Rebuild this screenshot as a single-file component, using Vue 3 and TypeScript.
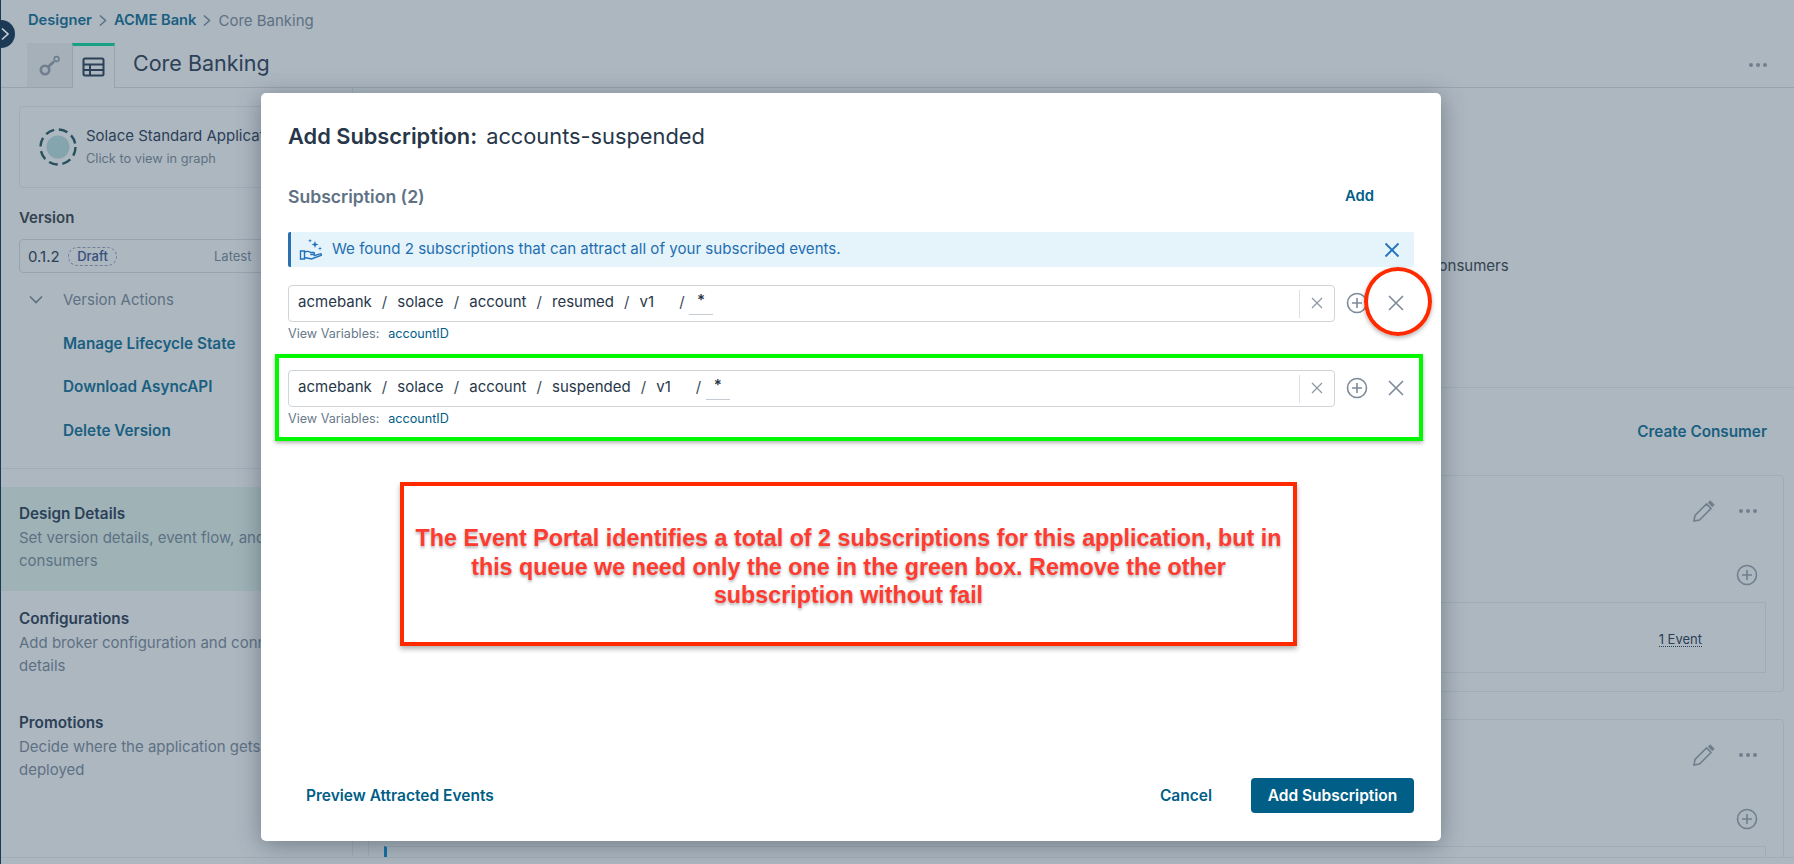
<script setup lang="ts">
interface Row { segs: string[] }
const rows: Row[] = [
  { segs: ['acmebank', 'solace', 'account', 'resumed', 'v1'] },
  { segs: ['acmebank', 'solace', 'account', 'suspended', 'v1'] },
]
const steps = [
  { title: 'Design Details', lines: ['Set version details, event flow, and', 'consumers'], on: true },
  { title: 'Configurations', lines: ['Add broker configuration and connection', 'details'], on: false },
  { title: 'Promotions', lines: ['Decide where the application gets', 'deployed'], on: false },
]
const links = ['Manage Lifecycle State', 'Download AsyncAPI', 'Delete Version']
</script>

<template>
  <div class="page">
    <div class="strip"></div>
    <div class="collapse">
      <svg width="12" height="14" viewBox="0 0 12 14"><path d="M3 1.500 9 7l-6 5.500" fill="none" stroke="#c9d2da" stroke-width="1.600"/></svg>
    </div>

    <div class="crumbs">
      <span class="crumb-link">Designer</span>
      <svg class="crumb-sep" width="8" height="13" viewBox="0 0 8 13"><path d="M1 1.500 6.500 6.500l-5.500 5" fill="none" stroke="#5d7183" stroke-width="1.500"/></svg>
      <span class="crumb-link">ACME Bank</span>
      <svg class="crumb-sep" width="8" height="13" viewBox="0 0 8 13"><path d="M1 1.500 6.500 6.500l-5.500 5" fill="none" stroke="#5d7183" stroke-width="1.500"/></svg>
      <span class="crumb-cur">Core Banking</span>
    </div>

    <div class="tabs">
      <div class="tab tab-off">
        <svg width="22" height="22" viewBox="0 0 22 22" fill="none" stroke="#6f7f8e"><circle cx="6" cy="16" r="4.200" stroke-width="2.600"/><path d="M9 13l6-5.500" stroke-width="2.800"/><circle cx="17.600" cy="5" r="2.400" stroke-width="1.600"/></svg>
      </div>
      <div class="tab tab-on">
        <svg width="23" height="20" viewBox="0 0 23 20" fill="none" stroke="#2c4057" stroke-width="2"><rect x="1.500" y="1.500" width="20" height="17" rx="1.500"/><path d="M1.500 7.500h20M1.500 13h20M8 7.500v11"/></svg>
      </div>
      <div class="app-title">Core Banking</div>
      <div class="head-dots"><i></i><i></i><i></i></div>
    </div>

    <div class="body">
      <aside class="side">
        <div class="app-card">
          <svg width="40" height="40" viewBox="0 0 40 40"><circle cx="20" cy="20" r="17.500" fill="none" stroke="#27515f" stroke-width="2.400" stroke-dasharray="9 4.800"/><circle cx="20" cy="20" r="11.500" fill="#84a5ae"/></svg>
          <div class="app-card-text">
            <div class="app-name">Solace Standard Application</div>
            <div class="app-hint">Click to view in graph</div>
          </div>
        </div>
        <div class="ver-label">Version</div>
        <div class="ver-select">
          <span class="ver-num">0.1.2</span>
          <span class="draft">Draft</span>
          <span class="latest">Latest</span>
        </div>
        <div class="ver-actions">
          <svg width="16" height="10" viewBox="0 0 16 10"><path d="M2 1.500 8 7.500l6-6" fill="none" stroke="#5d7183" stroke-width="1.700"/></svg>
          <span>Version Actions</span>
        </div>
        <div class="ver-link" v-for="l in links" :key="l">{{ l }}</div>
        <div class="side-div"></div>
        <div class="step" :class="{ 'step-on': s.on }" v-for="s in steps" :key="s.title">
          <div class="step-title">{{ s.title }}</div>
          <div class="step-line" v-for="t in s.lines" :key="t">{{ t }}</div>
        </div>
      </aside>

      <main class="main">
        <div class="overview"><p class="overview-text">consumers</p></div>
        <div class="cons-head"><span class="create">Create Consumer</span></div>
        <section class="cons-card" v-for="n in 2" :key="n">
          <div class="cons-top">
            <svg width="26" height="26" viewBox="0 0 26 26" fill="none" stroke="#6f7f8e" stroke-width="1.600"><path d="M3 23 4 17.500 15.500 6l4.500 4.500L8.500 22z"/><path d="M18 3.500l4.500 4.500" stroke-width="3.400"/></svg>
            <div class="dots"><i></i><i></i><i></i></div>
          </div>
          <div class="cons-add">
            <svg width="22" height="22" viewBox="0 0 22 22" fill="none" stroke="#6f7f8e" stroke-width="1.600"><circle cx="11" cy="11" r="9.500"/><path d="M11 6v10M6 11h10"/></svg>
          </div>
          <div class="cons-inner"><span class="ev" v-if="n === 1">1 Event</span></div>
        </section>
      </main>
    </div>
    <div class="foot"></div>

    <div class="modal">
      <h2 class="m-title"><b>Add Subscription:</b><span>accounts-suspended</span></h2>
      <div class="m-sub">
        <span class="m-sub-label">Subscription (2)</span>
        <span class="m-add">Add</span>
      </div>
      <div class="alert">
        <svg class="alert-icon" width="24" height="24" viewBox="0 0 24 24" fill="none" stroke="#2272b9" stroke-width="1.400">
          <path d="M1.500 13h4v8h-4zM5.500 14.500c2-1.500 4-1.500 6 0h3.200c1 0 1 2 0 2h-3.400M5.500 19.500l7 1.500 9.500-3.600c.9-.7 0-2-1-1.600l-6.300 2.100"/>
          <path d="M16 3l.9 2.600 2.600.9-2.600.9-.9 2.600-.9-2.600-2.600-.9 2.600-.9z" fill="#2272b9" stroke="none"/>
          <path d="M11 .8l.5 1.500 1.500.5-1.500.5-.5 1.500-.5-1.500L9 2.800l1.500-.5zM21 8.500l.5 1.500 1.500.5-1.500.5-.5 1.500-.5-1.500-1.500-.5 1.500-.5z" fill="#2272b9" stroke="none"/>
        </svg>
        <span class="alert-text">We found 2 subscriptions that can attract all of your subscribed events.</span>
        <svg width="16" height="16" viewBox="0 0 16 16" fill="none" stroke="#2272b9" stroke-width="1.800"><path d="M1.500 1.500l13 13M14.500 1.500l-13 13"/></svg>
      </div>

      <div class="sub-row" v-for="(r, i) in rows" :key="i">
        <div class="sub-main">
          <div class="sub-input">
            <div class="topic">
              <template v-for="(s, j) in r.segs" :key="j">
                <span v-if="j > 0" class="slash">/</span>
                <span>{{ s }}</span>
              </template>
              <span class="slash slash-last">/</span>
              <span class="wild">*</span>
            </div>
            <div class="clear">
              <svg width="12" height="12" viewBox="0 0 12 12" fill="none" stroke="#8b97a5" stroke-width="1.200"><path d="M1 1l10 10M11 1 1 11"/></svg>
            </div>
          </div>
          <div class="sub-actions">
            <svg class="act-plus" width="22" height="22" viewBox="0 0 22 22" fill="none" stroke="#7d8a99" stroke-width="1.600"><circle cx="11" cy="11" r="9.500"/><path d="M11 6v10M6 11h10"/></svg>
            <svg class="act-x" width="16" height="16" viewBox="0 0 16 16" fill="none" stroke="#7d8a99" stroke-width="1.600"><path d="M1 1l14 14M15 1 1 15"/></svg>
          </div>
        </div>
        <div class="vars"><span class="vars-label">View Variables:</span><span class="vars-val">accountID</span></div>
      </div>

      <div class="m-foot">
        <span class="preview">Preview Attracted Events</span>
        <span class="cancel">Cancel</span>
        <span class="primary">Add Subscription</span>
      </div>

      <div class="mark-circle"></div>
      <div class="mark-green"></div>
      <div class="mark-note">
        The Event Portal identifies a total of 2 subscriptions for this application, but in<br>
        this queue we need only the one in the green box. Remove the other<br>
        subscription without fail
      </div>
    </div>
  </div>
</template>

<style>
html, body { margin: 0; padding: 0; }
</style>

<style scoped>
.page {
  position: relative;
  width: 1794px;
  height: 864px;
  overflow: hidden;
  background: #adb7c0;
  font-family: Inter, "Noto Sans", sans-serif;
  font-size: 15px;
  color: #2c4057;
  display: flex;
  flex-direction: column;
}
.strip { position: absolute; left: 0; top: 0; bottom: 0; width: 1px; background: #1c3a55; z-index: 2; }
.collapse {
  position: absolute; left: -13px; top: 20px; width: 28px; height: 28px; border-radius: 50%;
  background: #1c3a55; display: flex; align-items: center; justify-content: flex-end; padding-right: 4px; box-sizing: border-box; z-index: 3;
}
.crumbs { height: 43px; padding: 0 0 3px 28px; box-sizing: border-box; display: flex; align-items: center; gap: 7px; }
.crumb-link { font-weight: 600; color: #1a5f80; font-size: 14.700px; }
.crumb-cur { color: #5d7183; }
.tabs { height: 45px; box-sizing: border-box; border-bottom: 1px solid #97a4b0; padding: 0 27px 0 27px; display: flex; align-items: stretch; }
.tab { display: flex; align-items: center; justify-content: center; height: 44px; box-sizing: border-box; }
.tab-off { width: 45px; background: #a6b0b9; }
.tab-on { width: 43px; border-top: 3px solid #17a084; border-right: 1px solid #97a4b0; border-left: 1px solid #97a4b0; margin-bottom: -1px; height: 45px; background: #adb7c0; }
.app-title { margin-left: 18px; font-size: 21.500px; line-height: 40px; color: #2c4057; }
.head-dots { margin-left: auto; display: flex; gap: 3px; align-items: center; }
.head-dots i, .dots i { width: 4px; height: 4px; border-radius: 50%; background: #6f7f8e; display: block; }
.body { flex: 1; display: flex; min-height: 0; }
.side { width: 353px; box-sizing: border-box; border-right: 1px solid #a0acb7; flex: none; }
.app-card { margin: 18px 0 0 19px; width: 320px; height: 82px; box-sizing: border-box; border: 1px solid #a0acb7; border-radius: 4px; display: flex; align-items: center; padding-left: 18px; white-space: nowrap; overflow: hidden; }
.app-card-text { margin-left: 8px; }
.app-name { font-size: 15px; line-height: 20px; color: #2c4057; }
.app-hint { font-size: 12.800px; line-height: 18px; margin-top: 4px; color: #5d7183; }
.ver-label { margin: 20px 0 0 19px; font-weight: 600; line-height: 20px; color: #33434f; }
.ver-select { margin: 11px 0 0 19px; width: 320px; height: 34px; box-sizing: border-box; border: 1px solid #97a4b0; border-radius: 4px; display: flex; align-items: center; padding-left: 8px; }
.ver-num { width: 40px; color: #2c4057; }
.draft { border: 1px dashed #6f7f9e; border-radius: 10px; height: 19px; width: 49px; box-sizing: border-box; text-align: center; font-size: 13px; font-weight: 500; line-height: 16px; color: #35507a; }
.latest { margin-left: 97px; font-size: 13px; color: #5d7183; }
.ver-actions { margin: 17px 0 0 28px; display: flex; align-items: center; gap: 19px; line-height: 20px; color: #5d7183; }
.ver-link { margin: 23.500px 0 0 63px; line-height: 20px; font-weight: 600; font-size: 15.300px; color: #1a5f80; }
.side-div { margin-top: 27px; height: 1px; background: #a0acb7; }
.step { margin-top: 0; height: 104px; box-sizing: border-box; padding: 18px 0 0 19px; white-space: nowrap; overflow: hidden; }
.side-div + .step { margin-top: 18px; }
.step-on { background: #9fb3b7; padding-top: 17px; }
.step-title { font-weight: 600; line-height: 20px; font-size: 15.300px; color: #2c4057; margin-bottom: 2px; }
.step-line { line-height: 23.500px; color: #5d7183; }
.main { flex: 1; min-width: 0; padding-right: 10px; padding-left: 15px; overflow: hidden; }
.overview { height: 299px; border-bottom: 1px solid #a0acb7; margin: 0 -10px 0 -15px; }
.overview-text { margin: 0; padding: 168px 0 0 1077px; line-height: 20px; color: #33434f; }
.cons-head { height: 87px; display: flex; justify-content: flex-end; align-items: center; padding-right: 17px; }
.create { font-weight: 600; font-size: 15.300px; color: #1a5f80; }
.cons-card { border: 1px solid #a0acb7; border-radius: 4px; height: 217px; box-sizing: border-box; margin-bottom: 27px; padding: 0 17px 0 15px; }
.cons-top { height: 70px; display: flex; align-items: center; justify-content: flex-end; gap: 22px; padding-right: 9px; }
.dots { display: flex; gap: 3px; width: 18px; }
.cons-add { height: 56px; box-sizing: border-box; padding: 18px 8px 0 0; display: flex; justify-content: flex-end; align-items: flex-start; }
.cons-inner { height: 71px; box-sizing: border-box; border: 1px solid #a0acb7; border-left: 3px solid #1172a4; display: flex; align-items: center; justify-content: flex-end; padding: 3px 63px 0 0; }
.ev { font-size: 13px; border-bottom: 1px dotted #2c4057; line-height: 14px; color: #2c4057; }
.foot { height: 7px; border-top: 1px solid #a0acb7; box-sizing: border-box; flex: none; }

.modal {
  position: absolute; left: 261px; top: 93px; width: 1180px; height: 748px; box-sizing: border-box; z-index: 5;
  background: #fff; border-radius: 5px; box-shadow: 0 4px 24px rgba(40, 55, 70, .45);
  padding: 29px 27px 28px; display: flex; flex-direction: column;
}
.m-title { margin: 0; display: flex; gap: 9px; font-size: 21.800px; line-height: 28px; font-weight: 400; color: #273749; }
.m-title b { font-weight: 600; }
.m-sub { margin-top: 35px; height: 24px; display: flex; align-items: center; justify-content: space-between; }
.m-sub-label { font-size: 17.600px; font-weight: 600; color: #5f7285; margin-bottom: 1px; }
.m-add { font-weight: 600; font-size: 14.800px; color: #015e87; margin: 0 40px 2px 0; }
.alert {
  margin-top: 23px; height: 35px; box-sizing: border-box; background: #e5f3fb; border-left: 3px solid #2a6fb0; border-radius: 2px;
  display: flex; align-items: center; padding: 0 14px 0 8px; margin-bottom: 18px;
}
.alert-icon { flex: none; }
.alert-text { margin: 0 0 2px 9px; color: #1f6fb0; font-size: 15.100px; flex: 1; }
.sub-row { height: 85px; }
.sub-main { display: flex; align-items: center; height: 37px; }
.sub-input { width: 1047px; height: 37px; box-sizing: border-box; border: 1px solid #cfd4d9; border-radius: 4px; display: flex; align-items: center; padding-left: 9px; }
.topic { flex: 1; display: flex; align-items: center; gap: 10.100px; color: #273749; font-size: 15px; padding-bottom: 4px; box-sizing: border-box; }
.slash { color: #3a4a5a; }
.slash-last { margin-left: 15px; }
.wild { width: 24px; height: 24px; margin: 3px 0 0 -5.700px; box-sizing: border-box; border-bottom: 1px solid #c4cbd2; text-align: center; line-height: 18px; font-weight: 600; }
.clear { width: 35px; height: 28px; border-left: 1px solid #dcdfe3; display: flex; align-items: center; justify-content: center; box-sizing: border-box; padding-bottom: 1px; }
.sub-actions { display: flex; align-items: center; padding-bottom: 2px; }
.act-plus { margin-left: 11px; }
.act-x { margin-left: 20px; }
.vars { margin-top: 3px; height: 16px; display: flex; align-items: center; gap: 9px; font-size: 12.600px; }
.vars-label { color: #6a7a8a; }
.vars-val { color: #015e87; }
.m-foot { margin-top: auto; display: flex; align-items: center; height: 35px; font-size: 15.500px; }
.preview { margin-left: 18px; font-weight: 600; color: #015e87; margin-bottom: 1px; }
.cancel { margin: 0 0 1px auto; font-weight: 600; color: #015e87; }
.primary { margin-left: 39px; width: 163px; height: 35px; background: #015e87; color: #fff; font-weight: 600; border-radius: 4px; display: flex; align-items: center; justify-content: center; }
.mark-circle { position: absolute; left: 1103px; top: 174px; width: 68px; height: 69px; box-sizing: border-box; border: 4px solid #ff2a00; border-radius: 50%; box-shadow: 0 2px 4px rgba(0,0,0,.3); }
.mark-green { position: absolute; left: 14px; top: 261px; width: 1148px; height: 87px; box-sizing: border-box; border: 4px solid #00f900; box-shadow: 0 2px 4px rgba(0,0,0,.3); }
.mark-note {
  position: absolute; left: 139px; top: 389px; width: 897px; height: 164px; box-sizing: border-box; border: 4px solid #ff2a00;
  box-shadow: 0 3px 5px rgba(0,0,0,.3); padding-top: 38px; white-space: nowrap;
  text-align: center; font-family: "Liberation Sans", Arial, sans-serif; font-weight: 700; font-size: 23.300px; line-height: 28.500px; color: #ff3b30;
  text-shadow: 0 2px 3px rgba(0,0,0,.3);
}
</style>
